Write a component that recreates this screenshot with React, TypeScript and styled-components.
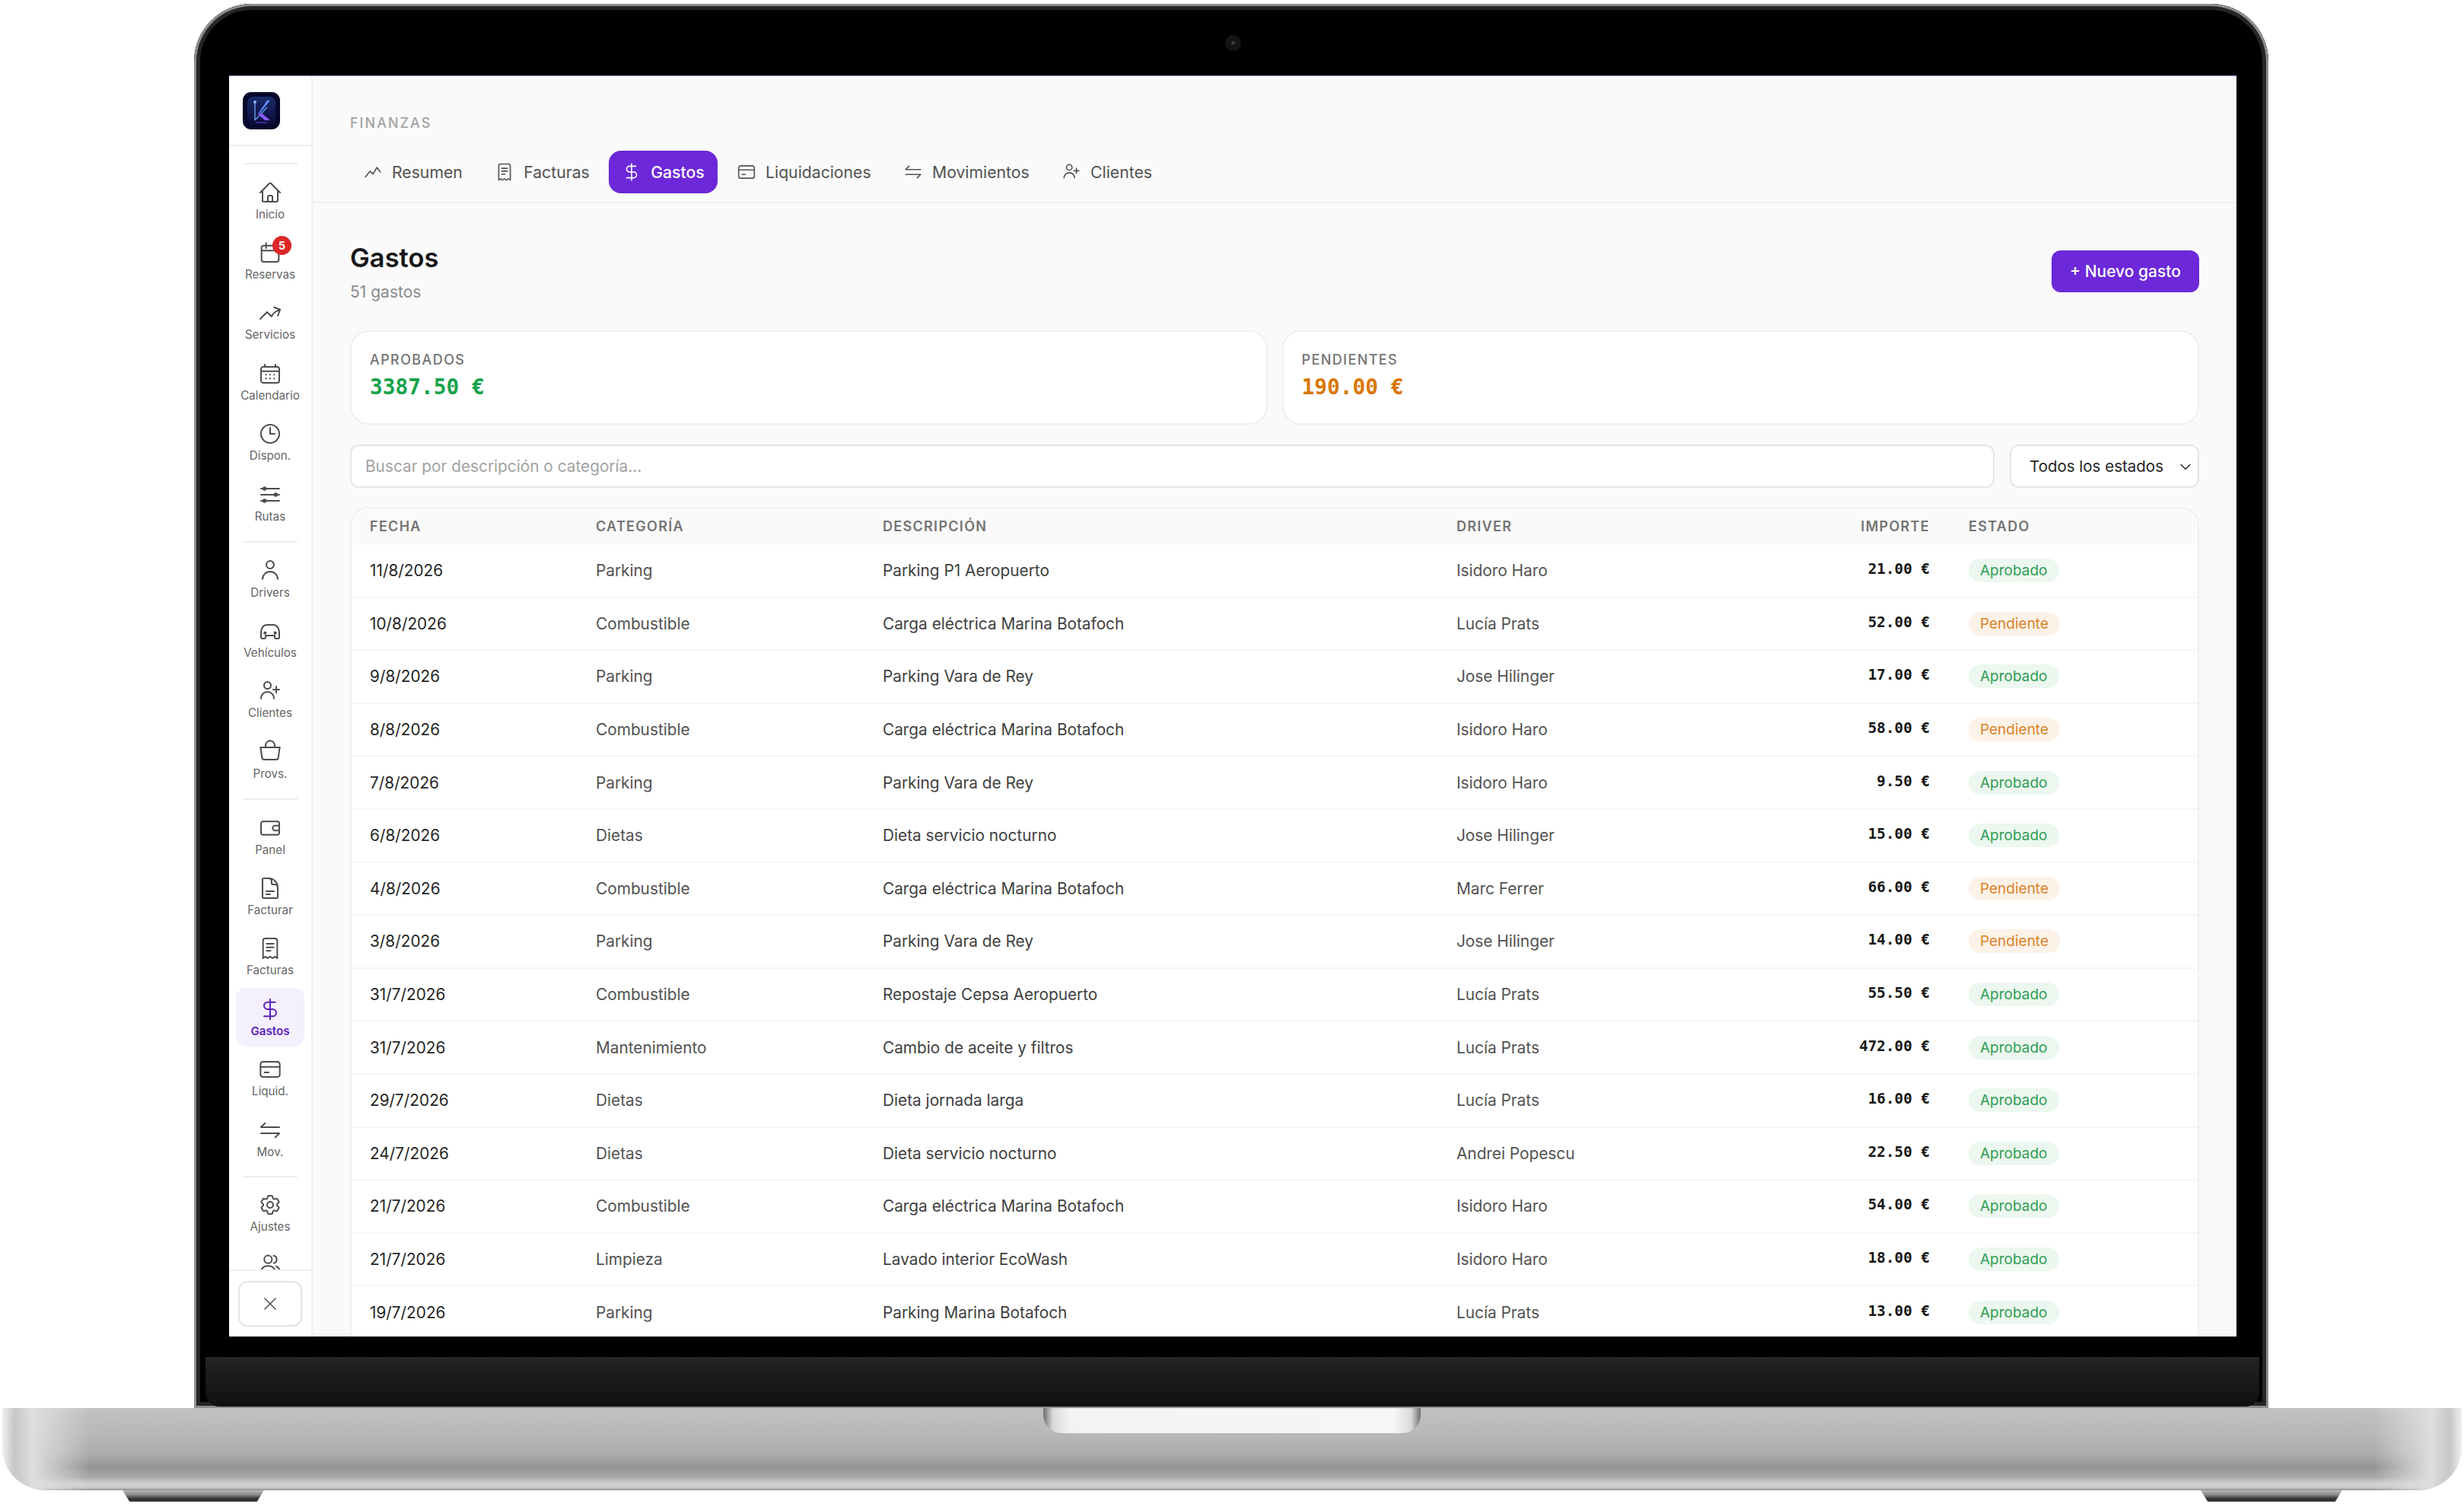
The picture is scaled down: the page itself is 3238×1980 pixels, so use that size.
import React from 'react'
import styled, { createGlobalStyle } from 'styled-components'

const GlobalStyle = createGlobalStyle`
  html, body {
    margin: 0;
    padding: 0;
    background: #fff;
    font-family: Inter, "Liberation Sans", sans-serif;
  }
  * {
    box-sizing: border-box;
  }
`

const Stage = styled.div`
  width: 3238px;
  height: 1980px;
  padding-top: 5px;
  overflow: hidden;
  background: #fff;
`

const Lid = styled.div`
  width: 2726px;
  height: 1845px;
  margin-left: 255px;
  padding: 0 42px 0 46px;
  background: #000;
  border-radius: 76px 76px 0 0;
  box-shadow: inset 0 0 0 3px #8f8f8f, inset 0 0 0 8px #262626;
  display: flex;
  flex-direction: column;
`

const CameraBar = styled.div`
  height: 94px;
  padding-top: 8px;
  flex-shrink: 0;
  display: flex;
  align-items: center;
  justify-content: center;
`

const Camera = styled.div`
  width: 21px;
  height: 21px;
  border-radius: 50%;
  background: #141414;
  display: flex;
  align-items: center;
  justify-content: center;

  &::after {
    content: '';
    width: 5px;
    height: 5px;
    border-radius: 50%;
    background: #3c3c3c;
  }
`

const Screen = styled.div`
  width: 2638px;
  height: 1657px;
  flex-shrink: 0;
  display: flex;
  overflow: hidden;
  background: #fafafa;
  border-top: 1px solid #8a68bd;
`

const Chin = styled.div`
  height: 65px;
  margin: 27px -30px 0 -31px;
  flex-shrink: 0;
  background: linear-gradient(180deg, #262626 0%, #1c1c1c 35%, #101010 100%);
  border-radius: 0 0 18px 18px;
`

const Base = styled.div`
  width: 3232px;
  height: 108px;
  margin-left: 3px;
  border-radius: 0 0 56px 56px;
  background:
    linear-gradient(90deg, #efefef 0, #c6c6c6 0.5%, #dedede 1.2%, rgba(200, 200, 200, 0) 3.6%, rgba(200, 200, 200, 0) 96.4%, #dedede 98.8%, #c6c6c6 99.5%, #efefef 100%),
    linear-gradient(180deg, #c2c2c2 0%, #b8b8b8 30%, #acacac 55%, #949494 72%, #a8a8a8 84%, #d0d0d0 92%, #c8c8c8 97%, #8a8a8a 100%);
  display: flex;
  justify-content: center;
  align-items: flex-start;
`

const Notch = styled.div`
  width: 496px;
  height: 33px;
  border-radius: 0 0 24px 24px;
  background: linear-gradient(90deg, #6f6f6f 0, #d8d8d8 2.5%, #f3f3f3 7%, #f6f6f6 93%, #d8d8d8 97.5%, #6f6f6f 100%);
`

const FeetRow = styled.div`
  width: 3238px;
  padding: 0 160px 0 161px;
  display: flex;
  justify-content: space-between;
`

const Foot = styled.div`
  width: 186px;
  height: 15px;
  background: linear-gradient(180deg, #b9b9b9 0%, #8a8a8a 40%, #2e2e2e 75%, #3a3a3a 100%);
  clip-path: polygon(0 0, 100% 0, 95% 100%, 5% 100%);
`

const Sidebar = styled.aside`
  width: 110px;
  flex-shrink: 0;
  display: flex;
  flex-direction: column;
  background: #fff;
  border-right: 2px solid #f0f0f0;
`

const LogoBox = styled.div`
  height: 92px;
  padding: 21px 0 0 18px;
  flex-shrink: 0;
  border-bottom: 2px solid #f0f0f0;
`

const Nav = styled.nav`
  flex: 1;
  min-height: 0;
  overflow: hidden;
  padding: 22px 9px 0;
  display: flex;
  flex-direction: column;
  gap: 2.4px;
`

const NavDivider = styled.div<{ $tight?: boolean }>`
  height: 2px;
  margin: ${(p) => (p.$tight ? '9px' : '10px')} 9px ${(p) => (p.$tight ? '5.2px' : '6.2px')};
  flex-shrink: 0;
  background: #eeeeee;

  &:first-child {
    margin-top: 0;
  }
`

const NavItem = styled.a<{ $active?: boolean }>`
  position: relative;
  height: 77px;
  flex-shrink: 0;
  padding-top: 12px;
  border-radius: 14px;
  display: flex;
  flex-direction: column;
  align-items: center;
  background: ${(p) => (p.$active ? '#f4f0fe' : 'transparent')};
  color: ${(p) => (p.$active ? '#5b21b6' : '#4d4d4d')};
`

const NavLabel = styled.span<{ $active?: boolean }>`
  margin-top: 4px;
  font-size: 15.2px;
  line-height: 18px;
  font-weight: ${(p) => (p.$active ? 600 : 400)};
  white-space: nowrap;
  color: ${(p) => (p.$active ? '#5b21b6' : '#666666')};
`

const NavBadge = styled.span`
  position: absolute;
  top: 6px;
  left: 48px;
  width: 25px;
  height: 25px;
  border-radius: 50%;
  background: #dc2626;
  color: #fff;
  font-size: 14px;
  font-weight: 700;
  display: flex;
  align-items: center;
  justify-content: center;
`

const SidebarFooter = styled.div`
  height: 88px;
  padding: 13px 0 0 12px;
  flex-shrink: 0;
  border-top: 2px solid #f0f0f0;
`

const CloseButton = styled.div`
  width: 84px;
  height: 60px;
  border: 2px solid #e5e5e5;
  border-radius: 12px;
  background: #fff;
  color: #555;
  display: flex;
  align-items: center;
  justify-content: center;
`

const Main = styled.main`
  flex: 1;
  min-width: 0;
  display: flex;
  flex-direction: column;
  overflow: hidden;
`

const Header = styled.header`
  height: 167px;
  padding: 50px 49px 0;
  flex-shrink: 0;
  border-bottom: 2px solid #eeeeee;
`

const Eyebrow = styled.div`
  height: 24px;
  font-size: 18px;
  line-height: 24px;
  font-weight: 500;
  letter-spacing: 2px;
  color: #a3a3a3;
`

const Tabs = styled.div`
  margin-top: 24px;
  display: flex;
  gap: 8.4px;
`

const Tab = styled.div<{ $active?: boolean }>`
  height: 56px;
  padding: 0 17px;
  border-radius: 16px;
  display: flex;
  align-items: center;
  gap: 12px;
  font-size: 21.2px;
  font-weight: ${(p) => (p.$active ? 500 : 400)};
  white-space: nowrap;
  background: ${(p) => (p.$active ? '#6d28d9' : 'transparent')};
  color: ${(p) => (p.$active ? '#fff' : '#525252')};
`

const Content = styled.div`
  flex: 1;
  min-height: 0;
  padding: 49px 49px 0;
  display: flex;
  flex-direction: column;
`

const TitleRow = styled.div`
  height: 80px;
  flex-shrink: 0;
  display: flex;
  align-items: center;
  justify-content: space-between;
`

const Title = styled.h1`
  margin: 0;
  font-size: 34.5px;
  line-height: 48px;
  font-weight: 600;
  color: #171717;
`

const Subtitle = styled.div`
  margin-top: 8px;
  font-size: 21px;
  line-height: 26px;
  color: #8a8a8a;
`

const PrimaryButton = styled.div`
  width: 194px;
  height: 55px;
  border-radius: 12px;
  background: #6d28d9;
  color: #fff;
  font-size: 21px;
  font-weight: 500;
  display: flex;
  align-items: center;
  justify-content: center;
`

const StatsRow = styled.div`
  margin-top: 38px;
  display: grid;
  grid-template-columns: 1fr 1fr;
  gap: 19px;
  flex-shrink: 0;
`

const StatCard = styled.div`
  height: 124px;
  padding: 26px 24px 0;
  background: #fff;
  border: 2px solid #efefef;
  border-radius: 24px;
`

const StatLabel = styled.div`
  font-size: 18px;
  line-height: 22px;
  font-weight: 500;
  letter-spacing: 1.4px;
  color: #737373;
`

const StatValue = styled.div<{ $color: string }>`
  margin-top: 6px;
  font-family: "DejaVu Sans Mono", "Liberation Mono", monospace;
  font-size: 27.8px;
  line-height: 38px;
  font-weight: 700;
  color: ${(p) => p.$color};
`

const FilterRow = styled.div`
  margin-top: 26px;
  display: flex;
  gap: 20px;
  flex-shrink: 0;
`

const SearchInput = styled.input`
  flex: 1;
  min-width: 0;
  height: 57px;
  padding: 0 18px;
  border: 2px solid #e6e6e6;
  border-radius: 12px;
  background: #fff;
  outline: none;
  font-family: inherit;
  font-size: 20.8px;
  color: #333;

  &::placeholder {
    color: #a3a3a3;
  }
`

const SelectBox = styled.div`
  width: 249px;
  height: 57px;
  padding: 0 6px 0 24px;
  border: 2px solid #e6e6e6;
  border-radius: 12px;
  background: #fff;
  display: flex;
  align-items: center;
  justify-content: space-between;
  font-size: 20.5px;
  color: #262626;
  white-space: nowrap;
`

const TablePanel = styled.div`
  margin-top: 25px;
  flex: 1;
  min-height: 0;
  background: #fff;
  border: 2px solid #efefef;
  border-bottom: 0;
  border-radius: 24px 24px 0 0;
  overflow: hidden;
`

const columns = '297px 377px 754px 423px 247px 1fr'

const TableHead = styled.div`
  height: 48px;
  padding-bottom: 1px;
  display: grid;
  grid-template-columns: ${columns};
  align-items: center;
  background: #fafafa;
`

const HeadCell = styled.div<{ $right?: boolean; $wide?: boolean }>`
  padding: 0 24px 0 ${(p) => (p.$wide ? '27px' : '24px')};
  font-size: 18px;
  font-weight: 600;
  letter-spacing: 1.3px;
  color: #737373;
  text-align: ${(p) => (p.$right ? 'right' : 'left')};
`

const TableRow = styled.div`
  height: 69.6px;
  display: grid;
  grid-template-columns: ${columns};
  align-items: center;
  border-bottom: 2px solid #f6f6f6;
`

const Cell = styled.div<{ $color?: string }>`
  padding: 0 24px;
  font-size: 20.8px;
  white-space: nowrap;
  color: ${(p) => p.$color ?? '#525252'};
`

const AmountCell = styled.div`
  padding: 0 24px 4px;
  font-family: "DejaVu Sans Mono", "Liberation Mono", monospace;
  font-size: 19.3px;
  font-weight: 700;
  text-align: right;
  white-space: nowrap;
  color: #171717;
`

const StatusCell = styled.div`
  padding: 0 24px 0 27px;
`

const Badge = styled.span<{ $pending: boolean }>`
  height: 31px;
  padding: 0 15px;
  border-radius: 999px;
  display: inline-flex;
  align-items: center;
  font-size: 19px;
  font-weight: 400;
  background: ${(p) => (p.$pending ? '#fdf2e7' : '#ecf7ef')};
  color: ${(p) => (p.$pending ? '#d9822b' : '#2f9e54')};
`

const Icon = ({ size = 32, width = 1.5, children }: { size?: number; width?: number; children: React.ReactNode }) => (
  <svg
    width={size}
    height={size}
    viewBox="0 0 24 24"
    fill="none"
    stroke="currentColor"
    strokeWidth={width}
    strokeLinecap="round"
    strokeLinejoin="round"
  >
    {children}
  </svg>
)

const icons: Record<string, React.ReactNode> = {
  home: <path d="m2.25 12 8.954-8.955c.44-.439 1.152-.439 1.591 0L21.75 12M4.5 9.75v10.125c0 .621.504 1.125 1.125 1.125H9.75v-4.875c0-.621.504-1.125 1.125-1.125h2.25c.621 0 1.125.504 1.125 1.125V21h4.125c.621 0 1.125-.504 1.125-1.125V9.75M8.25 21h8.25" />,
  booking: <path d="M3.5 7a2 2 0 0 1 2-2h13a2 2 0 0 1 2 2v12a2 2 0 0 1-2 2h-13a2 2 0 0 1-2-2zM3.5 10h17M8 2.5v5" />,
  trend: <path d="M2.25 18 9 11.25l4.306 4.306a11.95 11.95 0 0 1 5.814-5.518l2.74-1.22m0 0-5.94-2.281m5.94 2.28-2.28 5.941" />,
  calendar: (
    <>
      <path d="M6.75 3v2.25M17.25 3v2.25M3 18.75V7.5a2.25 2.25 0 0 1 2.25-2.25h13.5A2.25 2.25 0 0 1 21 7.5v11.25a2.25 2.25 0 0 1-2.25 2.25H5.25A2.25 2.25 0 0 1 3 18.75zM3 9.5h18" />
      <path d="M8 13h.01M12 13h.01M16 13h.01M8 16.8h.01M12 16.8h.01M16 16.8h.01" strokeWidth={1.7} />
    </>
  ),
  clock: <path d="M12 6v6h4.5m4.5 0a9 9 0 1 1-18 0 9 9 0 0 1 18 0Z" />,
  sliders: (
    <>
      <path d="M3 6h18M3 12h18M3 18h18" />
      <circle cx="6.5" cy="6" r="1.3" fill="currentColor" />
      <circle cx="17.5" cy="12" r="1.3" fill="currentColor" />
      <circle cx="6.5" cy="18" r="1.3" fill="currentColor" />
    </>
  ),
  user: <path d="M15.75 6a3.75 3.75 0 1 1-7.5 0 3.75 3.75 0 0 1 7.5 0ZM4.501 20.118a7.5 7.5 0 0 1 14.998 0" />,
  car: (
    <>
      <path d="M3 18v-4.500c0-4.500 2.500-7.500 6-7.500h6c3.500 0 6 3 6 7.500V18a1.500 1.500 0 0 1-1.500 1.500H18a1.500 1.500 0 0 1-1.500-1.500v-1.500h-9V18A1.500 1.500 0 0 1 6 19.500H4.500A1.500 1.500 0 0 1 3 18z" />
      <circle cx="7" cy="14" r=".8" fill="currentColor" />
      <circle cx="17" cy="14" r=".8" fill="currentColor" />
    </>
  ),
  userPlus: <path d="M18 7.5v3m0 0v3m0-3h3m-3 0h-3m-2.25-4.125a3.375 3.375 0 1 1-6.750 0 3.375 3.375 0 0 1 6.750 0ZM3 19.235v-.11a6.375 6.375 0 0 1 12.750 0v.109" />,
  bag: <path d="M2.500 7.500h19l-1.500 10a2.300 2.300 0 0 1-2.300 2H6.300a2.300 2.300 0 0 1-2.300-2zM7.500 7.500v-2a4.500 4.500 0 0 1 9 0v2" />,
  wallet: <path d="M3 7.500a2 2 0 0 1 2-2h14a2 2 0 0 1 2 2v9a2 2 0 0 1-2 2H5a2 2 0 0 1-2-2zM21 9.500h-4a2.500 2.500 0 0 0 0 5h4" />,
  document: <path d="M19.500 14.250v-2.625a3.375 3.375 0 0 0-3.375-3.375h-1.500A1.125 1.125 0 0 1 13.500 7.125v-1.500a3.375 3.375 0 0 0-3.375-3.375H8.250m0 12.750h7.500m-7.500 3H12M10.500 2.250H5.625c-.621 0-1.125.504-1.125 1.125v17.250c0 .621.504 1.125 1.125 1.125h12.750c.621 0 1.125-.504 1.125-1.125V11.250a9 9 0 0 0-9-9Z" />,
  receipt: <path d="M5 21.750V4.500a2.250 2.250 0 0 1 2.250-2.250h9.500A2.250 2.250 0 0 1 19 4.500v17.250l-2.330-1.600-2.330 1.600-2.340-1.600-2.340 1.600-2.330-1.600zM8.500 7.500h7M8.500 11h7M8.500 14.500h4" />,
  dollar: <path d="M12 2v20M17 5H9.500a3.500 3.500 0 0 0 0 7h5a3.500 3.500 0 0 1 0 7H6" />,
  card: <path d="M2.500 7a2.500 2.500 0 0 1 2.500-2.500h14A2.500 2.500 0 0 1 21.500 7v10a2.500 2.500 0 0 1-2.500 2.500H5A2.500 2.500 0 0 1 2.500 17zM2.500 9.500h19M6.500 15h4" />,
  transfer: <path d="M7 5 3 9h18M17 19l4-4H3" />,
  settings: <path d="M9.594 3.940c.090-.542.560-.940 1.110-.940h2.593c.550 0 1.020.398 1.110.940l.213 1.281c.063.374.313.686.645.870.074.040.147.083.220.127.325.196.720.257 1.075.124l1.217-.456a1.125 1.125 0 0 1 1.370.490l1.296 2.247a1.125 1.125 0 0 1-.260 1.431l-1.003.827c-.293.241-.438.613-.430.992a7.723 7.723 0 0 1 0 .255c-.008.378.137.750.430.991l1.004.827c.424.350.534.955.260 1.430l-1.298 2.247a1.125 1.125 0 0 1-1.369.491l-1.217-.456c-.355-.133-.750-.072-1.076.124a6.470 6.470 0 0 1-.220.128c-.331.183-.581.495-.644.869l-.213 1.281c-.090.543-.560.940-1.110.940h-2.594c-.550 0-1.019-.398-1.110-.940l-.213-1.281c-.062-.374-.312-.686-.644-.870a6.520 6.520 0 0 1-.220-.127c-.325-.196-.720-.257-1.076-.124l-1.217.456a1.125 1.125 0 0 1-1.369-.490l-1.297-2.247a1.125 1.125 0 0 1 .260-1.431l1.004-.827c.292-.240.437-.613.430-.991a6.932 6.932 0 0 1 0-.255c.007-.380-.138-.751-.430-.992l-1.004-.827a1.125 1.125 0 0 1-.260-1.430l1.297-2.247a1.125 1.125 0 0 1 1.370-.491l1.216.456c.356.133.751.072 1.076-.124.072-.044.146-.086.220-.128.332-.183.582-.495.644-.869l.214-1.280ZM15 12a3 3 0 1 1-6 0 3 3 0 0 1 6 0Z" />,
  users: (
    <>
      <circle cx="10" cy="6.500" r="3.800" />
      <path d="M15.500 2.800a3.800 3.800 0 0 1 0 7.400M3 20v-1a6 6 0 0 1 6-6h2a6 6 0 0 1 6 6v1M18 13.300a6 6 0 0 1 3.500 5.700v1" />
    </>
  ),
  close: <path d="M5.500 5.500l13 13M18.500 5.500l-13 13" />,
  activity: <path d="M3 18l5.500-7 3.500 3.500 5-8 4 5.500" />,
  chevron: <path d="m5 9 7 7 7-7" />,
}

const KLogo = () => (
  <svg width="49" height="49" viewBox="0 0 49 49">
    <defs>
      <linearGradient id="logoPanel" x1="0" y1="0" x2="0" y2="1">
        <stop offset="0" stopColor="#182a68" />
        <stop offset="1" stopColor="#0c0b3b" />
      </linearGradient>
      <linearGradient id="logoK" x1="0" y1="0" x2="1" y2="1">
        <stop offset="0" stopColor="#3fb0ff" />
        <stop offset="1" stopColor="#8a5cff" />
      </linearGradient>
    </defs>
    <rect width="49" height="49" rx="11" fill="#07072b" />
    <rect x="6" y="6" width="37" height="37" rx="8" fill="url(#logoPanel)" />
    <path d="M16 13v24" stroke="#6f9fe8" strokeWidth="1.400" fill="none" />
    <circle cx="16" cy="13" r="2" fill="#8db8f0" />
    <path d="M16 37l16-17" stroke="#5aa0f0" strokeWidth="1.400" fill="none" />
    <path d="M19 30l13-19h4L23 27z" fill="url(#logoK)" />
    <path d="M24 27l12 10h-7l-8-7z" fill="#8a5cff" />
    <path d="M17 40h15" stroke="#5a48e0" strokeWidth="1" />
  </svg>
)

type NavEntry = { icon: string; label?: string; badge?: string; active?: boolean } | 'divider' | 'dividerTight'

const navEntries: NavEntry[] = [
  'divider',
  { icon: 'home', label: 'Inicio' },
  { icon: 'booking', label: 'Reservas', badge: '5' },
  { icon: 'trend', label: 'Servicios' },
  { icon: 'calendar', label: 'Calendario' },
  { icon: 'clock', label: 'Dispon.' },
  { icon: 'sliders', label: 'Rutas' },
  'divider',
  { icon: 'user', label: 'Drivers' },
  { icon: 'car', label: 'Vehículos' },
  { icon: 'userPlus', label: 'Clientes' },
  { icon: 'bag', label: 'Provs.' },
  'divider',
  { icon: 'wallet', label: 'Panel' },
  { icon: 'document', label: 'Facturar' },
  { icon: 'receipt', label: 'Facturas' },
  { icon: 'dollar', label: 'Gastos', active: true },
  { icon: 'card', label: 'Liquid.' },
  { icon: 'transfer', label: 'Mov.' },
  'dividerTight',
  { icon: 'settings', label: 'Ajustes' },
  { icon: 'users' },
]

const tabs = [
  { icon: 'activity', label: 'Resumen' },
  { icon: 'receipt', label: 'Facturas' },
  { icon: 'dollar', label: 'Gastos', active: true },
  { icon: 'card', label: 'Liquidaciones' },
  { icon: 'transfer', label: 'Movimientos' },
  { icon: 'userPlus', label: 'Clientes' },
]

const gastos = [
  ['11/8/2026', 'Parking', 'Parking P1 Aeropuerto', 'Isidoro Haro', '21.00 €', 'Aprobado'],
  ['10/8/2026', 'Combustible', 'Carga eléctrica Marina Botafoch', 'Lucía Prats', '52.00 €', 'Pendiente'],
  ['9/8/2026', 'Parking', 'Parking Vara de Rey', 'Jose Hilinger', '17.00 €', 'Aprobado'],
  ['8/8/2026', 'Combustible', 'Carga eléctrica Marina Botafoch', 'Isidoro Haro', '58.00 €', 'Pendiente'],
  ['7/8/2026', 'Parking', 'Parking Vara de Rey', 'Isidoro Haro', '9.50 €', 'Aprobado'],
  ['6/8/2026', 'Dietas', 'Dieta servicio nocturno', 'Jose Hilinger', '15.00 €', 'Aprobado'],
  ['4/8/2026', 'Combustible', 'Carga eléctrica Marina Botafoch', 'Marc Ferrer', '66.00 €', 'Pendiente'],
  ['3/8/2026', 'Parking', 'Parking Vara de Rey', 'Jose Hilinger', '14.00 €', 'Pendiente'],
  ['31/7/2026', 'Combustible', 'Repostaje Cepsa Aeropuerto', 'Lucía Prats', '55.50 €', 'Aprobado'],
  ['31/7/2026', 'Mantenimiento', 'Cambio de aceite y filtros', 'Lucía Prats', '472.00 €', 'Aprobado'],
  ['29/7/2026', 'Dietas', 'Dieta jornada larga', 'Lucía Prats', '16.00 €', 'Aprobado'],
  ['24/7/2026', 'Dietas', 'Dieta servicio nocturno', 'Andrei Popescu', '22.50 €', 'Aprobado'],
  ['21/7/2026', 'Combustible', 'Carga eléctrica Marina Botafoch', 'Isidoro Haro', '54.00 €', 'Aprobado'],
  ['21/7/2026', 'Limpieza', 'Lavado interior EcoWash', 'Isidoro Haro', '18.00 €', 'Aprobado'],
  ['19/7/2026', 'Parking', 'Parking Marina Botafoch', 'Lucía Prats', '13.00 €', 'Aprobado'],
]

const App = () => {
  return (
    <Stage>
      <GlobalStyle />
      <Lid>
        <CameraBar>
          <Camera />
        </CameraBar>
        <Screen>
          <Sidebar>
            <LogoBox>
              <KLogo />
            </LogoBox>
            <Nav>
              {navEntries.map((entry, i) =>
                entry === 'divider' || entry === 'dividerTight' ? (
                  <NavDivider key={i} $tight={entry === 'dividerTight'} />
                ) : (
                  <NavItem key={i} $active={entry.active}>
                    <Icon>{icons[entry.icon]}</Icon>
                    {entry.badge && <NavBadge>{entry.badge}</NavBadge>}
                    {entry.label && <NavLabel $active={entry.active}>{entry.label}</NavLabel>}
                  </NavItem>
                ),
              )}
            </Nav>
            <SidebarFooter>
              <CloseButton>
                <Icon size={26}>{icons.close}</Icon>
              </CloseButton>
            </SidebarFooter>
          </Sidebar>
          <Main>
            <Header>
              <Eyebrow>FINANZAS</Eyebrow>
              <Tabs>
                {tabs.map((tab) => (
                  <Tab key={tab.label} $active={tab.active}>
                    <Icon size={26}>{icons[tab.icon]}</Icon>
                    {tab.label}
                  </Tab>
                ))}
              </Tabs>
            </Header>
            <Content>
              <TitleRow>
                <div>
                  <Title>Gastos</Title>
                  <Subtitle>51 gastos</Subtitle>
                </div>
                <PrimaryButton>+ Nuevo gasto</PrimaryButton>
              </TitleRow>
              <StatsRow>
                <StatCard>
                  <StatLabel>APROBADOS</StatLabel>
                  <StatValue $color="#16a34a">3387.50 €</StatValue>
                </StatCard>
                <StatCard>
                  <StatLabel>PENDIENTES</StatLabel>
                  <StatValue $color="#d97706">190.00 €</StatValue>
                </StatCard>
              </StatsRow>
              <FilterRow>
                <SearchInput placeholder="Buscar por descripción o categoría..." readOnly />
                <SelectBox>
                  Todos los estados
                  <Icon size={20} width={1.8}>{icons.chevron}</Icon>
                </SelectBox>
              </FilterRow>
              <TablePanel>
                <TableHead>
                  <HeadCell>FECHA</HeadCell>
                  <HeadCell>CATEGORÍA</HeadCell>
                  <HeadCell>DESCRIPCIÓN</HeadCell>
                  <HeadCell>DRIVER</HeadCell>
                  <HeadCell $right>IMPORTE</HeadCell>
                  <HeadCell $wide>ESTADO</HeadCell>
                </TableHead>
                {gastos.map((row, i) => (
                  <TableRow key={i}>
                    <Cell $color="#262626">{row[0]}</Cell>
                    <Cell>{row[1]}</Cell>
                    <Cell $color="#404040">{row[2]}</Cell>
                    <Cell>{row[3]}</Cell>
                    <AmountCell>{row[4]}</AmountCell>
                    <StatusCell>
                      <Badge $pending={row[5] === 'Pendiente'}>{row[5]}</Badge>
                    </StatusCell>
                  </TableRow>
                ))}
              </TablePanel>
            </Content>
          </Main>
        </Screen>
        <Chin />
      </Lid>
      <Base>
        <Notch />
      </Base>
      <FeetRow>
        <Foot />
        <Foot />
      </FeetRow>
    </Stage>
  )
}

export default App
